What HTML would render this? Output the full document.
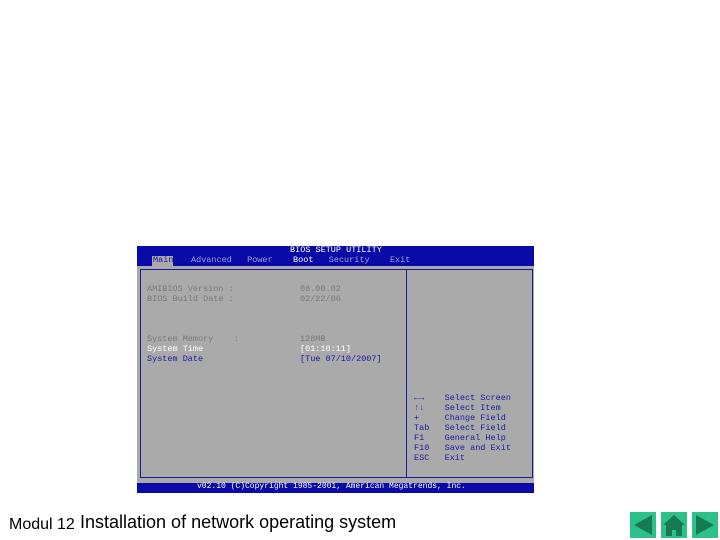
<!DOCTYPE html>
<html><head><style>
body{margin:0;width:720px;height:540px;background:#fff;position:relative;overflow:hidden;font-family:"Liberation Sans",sans-serif}
.a{position:absolute}
.bios{left:137px;top:246px;width:397px;height:247px;background:#aaaaaa}
.t{font-family:"Liberation Mono",monospace;font-size:8.5px;white-space:pre;position:absolute;line-height:10px}
.g{color:#7a7a7a}.w{color:#fff}.b{color:#1a1aa0}
</style></head><body>
<div class="a bios">
 <div class="a" style="left:0;top:0;width:397px;height:20px;background:#0a0aa8"></div>
 <div class="t w" style="left:153px;top:-1px">BIOS SETUP UTILITY</div>
 <div class="a" style="left:15px;top:10px;width:21px;height:10px;background:#aaa"></div>
 <div class="t" style="left:16px;top:9px;color:#1a1aa0">Main</div>
 <div class="t" style="left:54px;top:9px;color:#9aa0d8">Advanced   Power    <span style="color:#fff">Boot</span>   Security    Exit</div>
 <div class="a" style="left:3px;top:23px;width:267px;height:209px;border:1px solid #1a1aa0;box-sizing:border-box"></div>
 <div class="a" style="left:269px;top:23px;width:127px;height:209px;border:1px solid #1a1aa0;box-sizing:border-box"></div>
 <div class="t g" style="left:10px;top:38px">AMIBIOS Version :
BIOS Build Date :



System Memory    :</div>
 <div class="t g" style="left:163px;top:38px">08.00.02
02/22/06



128MB</div>
 <div class="t w" style="left:10px;top:98px">System Time</div>
 <div class="t w" style="left:163px;top:98px">[01:10:11]</div>
 <div class="t b" style="left:10px;top:108px">System Date</div>
 <div class="t b" style="left:163px;top:108px">[Tue 07/10/2007]</div>
 <div class="t b" style="left:277px;top:147px">←→    Select Screen
↑↓    Select Item
+     Change Field
Tab   Select Field
F1    General Help
F10   Save and Exit
ESC   Exit</div>
 <div class="a" style="left:0;top:237px;width:397px;height:10px;background:#0a0aa8"></div>
 <div class="t w" style="left:60px;top:236px;font-size:8px">v02.10 (C)Copyright 1985-2001, American Megatrends, Inc.</div>
</div>
<div class="a" style="left:9px;top:516px;font-size:16px;color:#000;white-space:nowrap">Modul 12</div>
<div class="a" style="left:80px;top:512px;font-size:18px;color:#000;white-space:nowrap">Installation of network operating system</div>
<svg class="a" style="left:628px;top:511px" width="92" height="28">
 <rect x="2" y="1" width="26" height="26" fill="#2cc08a"/>
 <polygon points="6,14 24,4 24,24" fill="#167a52"/>
 <rect x="33" y="1" width="26" height="26" fill="#2cc08a"/>
 <polygon points="46,4 35,14 57,14" fill="#167a52"/><rect x="38" y="14" width="16" height="11" fill="#167a52"/><rect x="44" y="19" width="4" height="6" fill="#2cc08a"/>
 <rect x="64" y="1" width="26" height="26" fill="#2cc08a"/>
 <polygon points="86,14 68,4 68,24" fill="#167a52"/>
</svg>
</body></html>
